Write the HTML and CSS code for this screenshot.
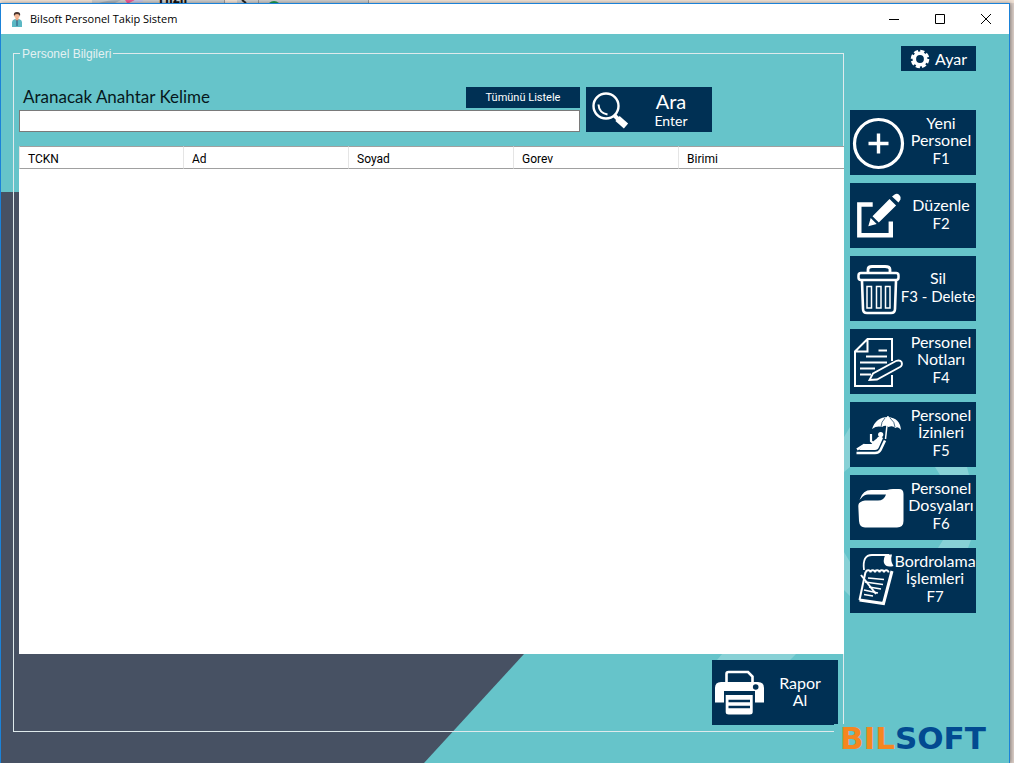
FILE: index.html
```html
<!DOCTYPE html>
<html lang="tr">
<head>
<meta charset="utf-8">
<title>Bilsoft Personel Takip Sistem</title>
<link rel="stylesheet" href="styles.css">
</head>
<body>
<div class="behind" aria-hidden="true">
  <div class="behind-tab behind-tab-main"><svg class="behind-art" width="50" height="3" viewBox="0 0 50 3"><path d="M6 3Q14 0 28 0L22 3z" fill="#a9b3bb"/><path d="M32 0h10l-6 3h-2z" fill="#f05a96"/><path d="M42 0h8v2l-12 1z" fill="#c3c3e4"/></svg><span class="behind-text">Hızlı</span></div>
  <div class="behind-tab behind-tab-slim"><svg width="12" height="3" viewBox="0 0 12 3"><path d="M3 0l4 3" stroke="#222" stroke-width="2"/></svg></div>
  <div class="behind-tab behind-tab-wide"><svg width="24" height="3" viewBox="0 0 24 3"><path d="M10 3Q15-1 20 3z" fill="#1f9a50"/></svg></div>
</div>
<div class="window">
  <header class="titlebar">
    <svg class="app-icon" width="10" height="15" viewBox="0 0 10 15"><path d="M0 15V10q0-2 3-3h4q3 1 3 3v5z" fill="#5cb8c4"/><path d="M3.500 5h3v3l-1.500 1-1.500-1z" fill="#e9a987"/><circle cx="5" cy="3.500" r="2.800" fill="#f2b795"/><path d="M2 4Q1 0 5 0t3 4Q7 2 5 2T2 4z" fill="#4a3530"/><path d="M5 8v6" stroke="#31507a"/></svg>
    <h1 class="title">Bilsoft Personel Takip Sistem</h1>
    <div class="controls">
      <button class="control" aria-label="Simge durumuna küçült"><svg width="12" height="12" viewBox="0 0 12 12"><path d="M1 6.500h10"/></svg></button>
      <button class="control" aria-label="Ekranı kapla"><svg width="12" height="12" viewBox="0 0 12 12"><path d="M1.500 1.500h9v9h-9z"/></svg></button>
      <button class="control" aria-label="Kapat"><svg width="12" height="12" viewBox="0 0 12 12"><path d="M1 1l10 10M11 1L1 11"/></svg></button>
    </div>
  </header>
  <main class="client">
    <svg class="backdrop" viewBox="0 0 1008 729" preserveAspectRatio="none" aria-hidden="true">
      <path d="M0 158H800V318L523 620L423 729H0z" fill="#475163"/>
      <path d="M716 626L721 620H795L789 626zM843 403L849 393V433L843 438zM843 518L849 528V562L843 556zM934 433H966L968 441H939zM942 506H970L967 514H937z" fill="#88d1d6"/>
    </svg>
    <fieldset class="panel">
      <legend class="panel-title">Personel Bilgileri</legend>
      <div class="search">
        <div class="search-field">
          <div class="search-head">
            <label class="search-label" for="keyword">Aranacak Anahtar Kelime</label>
            <button class="btn btn-small">Tümünü Listele</button>
          </div>
          <input class="search-input" id="keyword" type="text">
        </div>
        <button class="btn btn-search">
          <svg class="icon icon-search" viewBox="0 0 44 45"><circle cx="20" cy="19" r="12.500" stroke-width="2.400"/><path d="M12.500 17.500Q13 26 21.500 27.500" stroke-width="2"/><path d="M28 28l4 4" stroke-width="4"/><path d="M31.500 31.500l8.500 7.500" stroke-width="6.400"/></svg>
          <span class="caption"><span class="line line-big">Ara</span><span class="line line-sub">Enter</span></span>
        </button>
      </div>
      <div class="list">
        <table class="grid">
          <thead><tr><th scope="col">TCKN</th><th scope="col">Ad</th><th scope="col">Soyad</th><th scope="col">Gorev</th><th scope="col">Birimi</th></tr></thead>
          <tbody></tbody>
        </table>
      </div>
      <div class="actions">
        <button class="btn btn-tile">
          <svg class="icon icon-report" viewBox="0 0 50 65"><path d="M14.500 23V14q0-2 2-2H36l4.500 4.500V23" stroke-width="2.600"/><path class="solid" d="M3 28q0-6 6-6H46q6 0 6 6V42.500H43V31H12V42.500H3z"/><circle class="hole" cx="43.700" cy="27" r="2.800"/><path class="solid" d="M13.700 35h27v17q0 2.500-3 2.500h-21q-3 0-3-2.500z"/><path class="cut" d="M16.500 41h21.500M16.500 47h21.500" stroke-width="2.400"/></svg>
          <span class="caption"><span class="line">Rapor</span><span class="line">Al</span></span>
        </button>
      </div>
    </fieldset>
    <nav class="side">
      <button class="btn btn-settings">
        <svg class="icon icon-gear" viewBox="0 0 20 20"><circle cx="10" cy="10" r="5.700" stroke-width="3.600"/><circle cx="10" cy="10" r="8" stroke-width="2.600" stroke-dasharray="4.200 2.083"/></svg>
        <span>Ayar</span>
      </button>
      <div class="side-list">
        <button class="btn btn-tile">
          <svg class="icon" viewBox="0 0 56 65"><circle cx="28.500" cy="33.500" r="24" stroke-width="3.200"/><path d="M18.500 33.500h20M28.500 23.500v20" stroke-width="3.400"/></svg>
          <span class="caption"><span class="line">Yeni</span><span class="line">Personel</span><span class="line line-key">F1</span></span>
        </button>
        <button class="btn btn-tile">
          <svg class="icon" viewBox="0 0 56 65"><path d="M22.700 21.500H9.300V52.300H40.800V38.500" stroke-width="4.400"/><path class="solid" d="M18.300 43.300l2.400-8.300 6 6zM22.500 33.200l17-17.200 6.600 6.600-17.300 17zM42 13.400l3-2.200q2.500-1 4.500 1t1 4.300l-2 2.900z"/></svg>
          <span class="caption"><span class="line">Düzenle</span><span class="line line-key">F2</span></span>
        </button>
        <button class="btn btn-tile">
          <svg class="icon icon-delete" viewBox="0 0 50 65"><rect x="8.500" y="17" width="40" height="7" rx="2.500" stroke-width="2.500"/><path d="M18 16v-2.500q0-3 4-3h13q5 0 5 3V16" stroke-width="2.800"/><path d="M12 25l1 28q0 4 4 4h24q4 0 4-4l1-28" stroke-width="2.600"/><path d="M17 30.500h4.500v21.500h-4.500zM26.500 30.500h4.500v21.500h-4.500zM35.500 30.500h4.500v21.500h-4.500z" stroke-width="1.500"/></svg>
          <span class="caption"><span class="line">Sil</span><span class="line line-key">F3 - Delete</span></span>
        </button>
        <button class="btn btn-tile">
          <svg class="icon" viewBox="0 0 56 65"><path d="M42 32V10H17.500L5 22.500V57H42V46M17.500 10V22.500H5" stroke-width="2"/><path d="M28.500 21.500H37M16 27.500H37M10 33.500H37M10 39.500H25M10 45.500H21" stroke-width="2"/><path class="hole outlined" d="M19.500 51L23 44.500L46 32q4-1.500 5.700 1.200q1 3-1.700 4.800L27 50.500z" stroke-width="1.800"/></svg>
          <span class="caption"><span class="line">Personel</span><span class="line">Notları</span><span class="line line-key">F4</span></span>
        </button>
        <button class="btn btn-tile">
          <svg class="icon" viewBox="0 0 56 65"><path class="solid" d="M22 27Q26 15 38 15Q50 16 51 28q-3-4-5.500-2q-3-3-7-1q-3-2.500-6.500 0q-5-1.500-10 2z"/><path d="M38 14L35.500 37" stroke-width="1.500"/><path class="cut" d="M35 16q-4 4-4 9M40 16q5 4 5 9" stroke-width=".7"/><path d="M6.500 51H25Q29 51 30.500 48L35 38.500" stroke-width="2.500"/><path d="M7 47.500l7-4.500 4 1" stroke-width="2.500"/><path class="solid" d="M14 42l8 0 6-7q3-1.500 5 1l-4 9q-1 3-4 3H9z"/><path d="M27 38l-4 3-2-2V32" stroke-width="2.200"/><circle class="solid" cx="30.700" cy="32.500" r="2.600"/></svg>
          <span class="caption"><span class="line">Personel</span><span class="line">İzinleri</span><span class="line line-key">F5</span></span>
        </button>
        <button class="btn btn-tile">
          <svg class="icon" viewBox="0 0 56 65"><path class="solid" d="M10 24Q13 15 21 15H37Q40 14 43 14H49Q53.500 14 53.500 19V46Q53.500 52.500 47 52.500H15Q9.500 52.500 9 46L8.300 31Q8.500 27 10 24z"/><path class="hole" d="M7 27L11 23.500Q14 19.500 18 19.500H36Q34 26 27 25.500H15Q10 26 7.500 30z"/></svg>
          <span class="caption"><span class="line">Personel</span><span class="line">Dosyaları</span><span class="line line-key">F6</span></span>
        </button>
        <button class="btn btn-tile">
          <svg class="icon icon-payroll" viewBox="0 0 44 65"><path d="M14 22Q12 7 22 7H39" stroke-width="1.800"/><path class="solid" d="M36 6.500Q33 10 34 15Q36 20 43.500 18Q40 13 42 6.500z"/><path d="M15.500 24L9.500 52" stroke-width="2"/><path d="M9.500 52L33.500 55.500L42 23" stroke-width="3"/><path d="M16 24.500a2.200 2.200 0 1 1 4.500 0a2.200 2.200 0 1 1 4.500 0a2.200 2.200 0 1 1 4.500 0a2.200 2.200 0 1 1 4.500 0a2.200 2.200 0 1 1 4.500 0" stroke-width="2"/><path d="M18 30l16 1.500M15 34l18 2.500M19 39l12 2M14 42l14 3M14 46.500l9 1.500" stroke-width="1.500"/><path d="M11 27L26 46" stroke-width="2"/></svg>
          <span class="caption"><span class="line">Bordrolama</span><span class="line">İşlemleri</span><span class="line line-key">F7</span></span>
        </button>
      </div>
    </nav>
    <div class="logo"><span class="logo-first">BIL</span>SOFT</div>
  </main>
</div>
</body>
</html>
```
FILE: styles.css
```css
* { box-sizing: border-box; }

body {
  margin: 0;
  min-height: 100vh;
  display: flex;
  flex-direction: column;
  background: #dccfc8;
  font-family: Roboto, "Liberation Sans", sans-serif;
  font-size: 12px;
  overflow: hidden;
}

.behind { display: flex; height: 3px; padding-left: 92px; overflow: hidden; background: #f0e2d6; }
.behind-tab { display: flex; align-items: flex-end; height: 3px; background: #cdcdcd; border-right: 1px solid #999; overflow: hidden; }
.behind-tab-main { width: 133px; padding-left: 1px; }
.behind-art { margin-right: 16px; }
.behind-tab-slim { width: 22px; margin-left: 12px; padding-left: 2px; }
.behind-tab-wide { width: 110px; }
.behind-text { font-size: 14px; line-height: 10px; font-weight: bold; color: #111; }

.window {
  flex: 1;
  display: flex;
  flex-direction: column;
  margin-right: 4px;
  border: 1px solid #1b82d8;
  border-bottom: 0;
  box-shadow: 1px 0 4px rgba(0, 0, 0, .4);
}

.titlebar { display: flex; align-items: center; height: 30px; padding-left: 11px; background: #fff; }
.app-icon { margin-right: 8px; }
.title { margin: 0; padding-bottom: 2px; flex: 1; font: 11px "Open Sans", sans-serif; color: #000; }
.controls { display: flex; }
.control {
  display: grid;
  place-items: center;
  width: 46px;
  height: 29px;
  padding: 0;
  border: 0;
  background: none;
}
.control svg { fill: none; stroke: #000; stroke-width: 1; }

.client {
  flex: 1;
  position: relative;
  display: flex;
  gap: 6px;
  padding: 12px 33px 31px 12px;
  background: #66c4ca;
}
.backdrop { position: absolute; inset: 0; width: 100%; height: 100%; }

.panel {
  position: relative;
  flex: 1;
  min-width: 0;
  display: flex;
  flex-direction: column;
  margin: 0;
  padding: 26px 5px 6px;
  border: 1px solid #dfeaec;
}
.panel-title {
  margin-left: 1px;
  padding: 2px 2px 0;
  font: 12px/13px "Liberation Sans", sans-serif;
  color: #e4f1f2;
}

.search { display: flex; align-items: stretch; gap: 6px; height: 45px; }
.search-field { flex: 0 1 561px; display: flex; flex-direction: column; gap: 2px; }
.search-head { display: flex; justify-content: space-between; height: 21px; }
.search-label { padding-left: 4px; font: 17px/20px Lato, sans-serif; color: #06181c; }
.search-input {
  width: 100%;
  height: 22px;
  padding: 2px 4px;
  border: 1px solid #7a7a7a;
  background: #fff;
  font: inherit;
}

.btn { border: 0; padding: 0; background: #003054; color: #fff; font: 16px/17px Lato, sans-serif; }
.btn-small { width: 114px; font: 11px/20px Roboto, sans-serif; }
.btn-search { display: flex; width: 126px; }
.btn-tile { display: flex; align-items: center; width: 126px; height: 65px; }

.icon { flex: none; width: 56px; height: 65px; fill: none; stroke: #fff; overflow: visible; }
.icon-search { width: 44px; height: 45px; }
.icon-report { width: 50px; }
.icon-delete { width: 50px; }
.icon-payroll { width: 44px; }
.icon-gear { width: 20px; height: 20px; }
.icon .solid { fill: #fff; stroke: none; }
.icon .hole { fill: #003054; stroke: none; }
.icon .outlined { stroke: #fff; }
.icon .cut { stroke: #003054; }

.caption { flex: 1; display: flex; flex-direction: column; align-items: center; align-self: center; min-width: 0; padding-bottom: 3px; }
.line { white-space: nowrap; }
.line-big { font-size: 20px; line-height: 22px; }
.line-sub { font-size: 14px; }
.line-key { font-size: 15px; line-height: 20px; }
.btn-search .caption { padding-bottom: 0; }

.list { flex: 1; margin: 14px -6px 6px 0; background: #fff; }
.grid { width: 100%; table-layout: fixed; border-collapse: separate; border-spacing: 0; }
.grid th {
  height: 23px;
  padding: 2px 8px 0;
  border-top: 1px solid #a0a0a0;
  border-bottom: 1px solid #a0a0a0;
  border-right: 1px solid #e5e5e5;
  text-align: left;
  font-weight: normal;
  color: #000;
}
.grid th:first-child { border-left: 1px solid #e5e5e5; }
.grid th:last-child { border-right: 0; }

.actions { display: flex; justify-content: flex-end; }

.side { position: relative; display: flex; flex-direction: column; align-items: flex-end; gap: 39px; }
.side-list { display: flex; flex-direction: column; gap: 8px; }
.btn-settings { display: flex; align-items: center; gap: 5px; width: 75px; height: 25px; padding-left: 9px; }

.logo {
  position: absolute;
  right: 14px;
  bottom: 11px;
  width: 161px;
  padding-left: 6px;
  background: #66c4ca;
  font: bold 31px/28px "DejaVu Sans", sans-serif;
  color: #024a91;
}
.logo-first { color: #f5861f; }
```
